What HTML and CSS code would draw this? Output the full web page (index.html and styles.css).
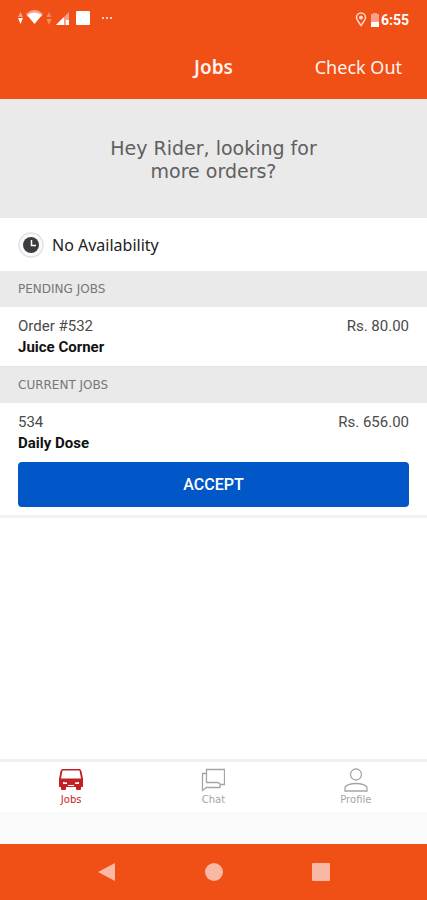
FILE: index.html
```html
<!DOCTYPE html>
<html lang="en">
<head>
<meta charset="utf-8">
<meta name="viewport" content="width=device-width, initial-scale=1">
<title>Jobs</title>
<link rel="stylesheet" href="styles.css">
</head>
<body>
<div class="app">
  <div class="status">
    <svg class="status-icons" width="98" height="18" viewBox="0 0 98 18" aria-hidden="true">
      <path d="M0 8l2.500-5 2.500 5z" fill="#f9a185"/><path d="M0 9h5l-2.500 6z" fill="#fff"/>
      <path d="M8 5q8.500-8 17 0l-2 3q-6.500-6-13 0z" fill="#f9a185"/><path d="M9 6q7.500-5 15 0l-7.500 9z" fill="#fff"/>
      <path d="M28.500 8l2.500-5 2.500 5zM28.500 10h5l-2.500 6z" fill="#f68a66"/>
      <path d="M38 16L51 3v13z" fill="#f9a185"/><path d="M38 16l8-8v8zM48 11h3v5h-3z" fill="#fff"/>
      <rect x="58" y="2" width="14" height="14" rx="1" fill="#fff"/>
      <path d="M84 9h2M88 9h2M92 9h2" stroke="#fcd0c0" stroke-width="2"/>
    </svg>
    <div class="status-right">
      <svg width="12" height="16" viewBox="0 0 12 16" aria-hidden="true"><path d="M6 13.500C3 9.500 1.500 7.500 1.500 5.500a4.500 4.500 0 0 1 9 0c0 2-1.500 4-4.500 8z" fill="none" stroke="#fddacd" stroke-width="1.500"/><circle cx="6" cy="5.500" r="2" fill="#fddacd"/></svg>
      <svg width="8" height="16" viewBox="0 0 8 16" aria-hidden="true"><path d="M0 2h2V1h4v1h2v9H0z" fill="#f9a185"/><path d="M0 10h8v5H0z" fill="#fff"/></svg>
      <span class="time">6:55</span>
    </div>
  </div>
  <header class="header">
    <h1 class="title">Jobs</h1>
    <button class="checkout" type="button">Check Out</button>
  </header>
  <main class="main">
    <p class="hero">Hey Rider, looking for<br>more orders?</p>
    <div class="availability">
      <svg width="26" height="26" viewBox="0 0 26 26" aria-hidden="true"><circle cx="13" cy="13" r="12" fill="#fafafa" stroke="#e2e2e2" stroke-width="1.500"/><circle cx="13" cy="13" r="8" fill="#3c3d40"/><path d="M13.500 8v5.500H18" fill="none" stroke="#fff" stroke-width="1.500"/></svg>
      <span>No Availability</span>
    </div>
    <h2 class="section">PENDING JOBS</h2>
    <article class="job">
      <div class="line"><span>Order #532</span><span>Rs. 80.00</span></div>
      <h3 class="shop">Juice Corner</h3>
    </article>
    <h2 class="section">CURRENT JOBS</h2>
    <article class="job current">
      <div class="line"><span>534</span><span>Rs. 656.00</span></div>
      <h3 class="shop">Daily Dose</h3>
      <button class="accept" type="button">ACCEPT</button>
    </article>
  </main>
  <nav class="tabs">
    <a class="tab active" href="#jobs">
      <svg width="24" height="24" viewBox="0 0 24 24" aria-hidden="true"><path fill="currentColor" fill-rule="evenodd" d="M3 1h18l1.500 2L24 11v8h-2v2q0 1-1 1h-3q-1 0-1-1v-2H7v2q0 1-1 1H3q-1 0-1-1v-2H0v-8L1.500 3zM3.500 2.500L2 10.500h20l-1.500-8zM4 14v2h4v-1.500zM20 14v2h-4v-1.500zM9 17v1h6v-1z"/></svg>
      <span>Jobs</span>
    </a>
    <a class="tab" href="#chat">
      <svg width="24" height="24" viewBox="0 0 24 24" aria-hidden="true"><path fill="none" stroke="currentColor" stroke-width="1.300" d="M5.500 1.500h18v15H20l-3-2H5.500zM5.500 5.500h-4v17l4-3H19v-4"/></svg>
      <span>Chat</span>
    </a>
    <a class="tab" href="#profile">
      <svg width="24" height="24" viewBox="0 0 24 24" aria-hidden="true"><g fill="none" stroke="currentColor" stroke-width="1.300"><circle cx="12" cy="6.500" r="5.500"/><path d="M1 23v-3c0-3 6-4.500 11-4.500S23 17 23 20v3z"/></g></svg>
      <span>Profile</span>
    </a>
  </nav>
  <div class="system">
    <button type="button" aria-label="Back"><svg width="20" height="20" viewBox="0 0 20 20"><path d="M1 10L18 1v18z"/></svg></button>
    <button type="button" aria-label="Home"><svg width="20" height="20" viewBox="0 0 20 20"><circle cx="10" cy="10" r="9"/></svg></button>
    <button type="button" aria-label="Recent apps"><svg width="20" height="20" viewBox="0 0 20 20"><rect x="1" y="1" width="18" height="18" rx="1"/></svg></button>
  </div>
</div>
</body>
</html>
```
FILE: styles.css
```css
* { box-sizing: border-box; }
body {
  margin: 0;
  background: #fff;
  color: #4a4a4a;
  font-family: Roboto, "Liberation Sans", sans-serif;
}
h1, h2, h3, p { margin: 0; font-weight: 400; }
button { border: 0; margin: 0; padding: 0; background: none; font: inherit; color: inherit; cursor: pointer; }
svg { display: block; flex: none; }
.app { min-height: 100vh; display: flex; flex-direction: column; }
.status {
  display: flex;
  justify-content: space-between;
  align-items: center;
  height: 36px;
  padding: 0 18px;
  background: #f04f16;
  color: #fff;
}
.status-right { display: flex; align-items: center; gap: 4px; padding-top: 4px; }
.time { margin-left: -2px; font-size: 14px; font-weight: 700; line-height: 20px; }
.header {
  display: grid;
  grid-template-columns: 1fr auto 1fr;
  align-items: center;
  height: 63px;
  padding: 0 25px 2px;
  background: #f04f16;
  color: #fff3ee;
  font-family: "Noto Sans", sans-serif;
  font-size: 18px;
}
.title { grid-column: 2; font-size: 19px; font-weight: 600; }
.checkout { justify-self: end; }
.hero {
  padding: 38px 16px 35px;
  background: #eaeaea;
  color: #606060;
  font: 19px/23px "DejaVu Sans", sans-serif;
  text-align: center;
}
.availability {
  display: flex;
  align-items: center;
  gap: 8px;
  height: 53px;
  padding: 0 18px;
  color: #222;
  font: 16px/20px "Noto Sans", sans-serif;
}
.section {
  padding: 0 18px;
  background: #eaeaea;
  color: #777;
  font: 12px/36px "DejaVu Sans", sans-serif;
}
.job { padding: 9px 18px 8px; border-bottom: 1px solid #e4e4e4; }
.line { display: flex; justify-content: space-between; font-size: 15px; line-height: 21px; }
.shop { color: #111; font-size: 15px; font-weight: 700; line-height: 21px; }
.current { border-bottom: 3px solid #f2f2f2; }
.accept {
  display: block;
  width: 100%;
  height: 45px;
  margin-top: 8px;
  border-radius: 4px;
  background: #0257c8;
  color: #fff;
  font-size: 16px;
  font-weight: 500;
}
.main { flex: 1; }
.tabs {
  display: grid;
  grid-template-columns: repeat(3, 1fr);
  border-top: 3px solid #f0f0f0;
  height: 53px;
}
.tab {
  display: flex;
  flex-direction: column;
  align-items: center;
  padding-top: 6px;
  color: #a5a5a5;
  font: 10px/16px "DejaVu Sans", sans-serif;
  text-decoration: none;
}
.active { color: #c41f24; }
.system {
  display: flex;
  justify-content: space-around;
  align-items: center;
  border-top: 32px solid #fafafa;
  height: 88px;
  padding: 0 53px;
  background: #f04f16;
  fill: #f9b8a4;
}
.system button { width: 20px; }
```
